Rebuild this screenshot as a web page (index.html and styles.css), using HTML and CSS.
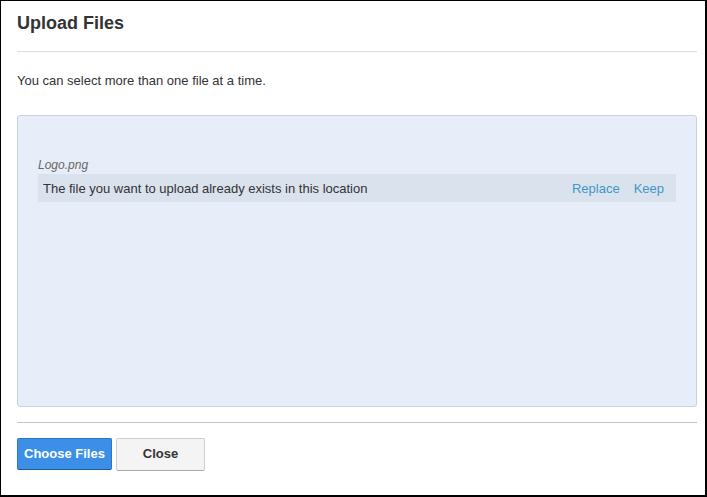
FILE: index.html
```html
<!DOCTYPE html>
<html lang="en">
<head>
<meta charset="utf-8">
<title>Upload Files</title>
<link rel="stylesheet" href="styles.css">
</head>
<body>
<div class="dialog">
  <h1 class="title">Upload Files</h1>
  <hr class="rule rule-top">
  <p class="hint">You can select more than one file at a time.</p>
  <div class="dropzone">
    <div class="file-name">Logo.png</div>
    <div class="conflict">
      <span class="conflict-msg">The file you want to upload already exists in this location</span>
      <span class="actions">
        <a class="action" href="#">Replace</a>
        <a class="action" href="#">Keep</a>
      </span>
    </div>
  </div>
  <hr class="rule rule-bottom">
  <div class="buttons">
    <button class="btn btn-primary">Choose Files</button>
    <button class="btn btn-default">Close</button>
  </div>
</div>
</body>
</html>
```
FILE: styles.css
```css
html, body {
  margin: 0;
  padding: 0;
  background: #fff;
}
body {
  font-family: "Liberation Sans", Arial, sans-serif;
  font-size: 13px;
  color: #333;
}
.dialog {
  box-sizing: border-box;
  width: 707px;
  height: 497px;
  border: 1px solid #000;
  border-right-width: 2px;
  border-bottom-width: 2px;
  padding: 12px 8px 0 16px;
}
.title {
  margin: 0;
  font-size: 18px;
  line-height: 20px;
  font-weight: bold;
  color: #333;
}
.rule {
  border: 0;
  height: 1px;
  margin: 0;
}
.rule-top {
  background: #dcdcdc;
  margin-top: 18px;
}
.hint {
  margin: 20px 0 0;
  line-height: 18px;
}
.dropzone {
  box-sizing: border-box;
  margin-top: 25px;
  height: 292px;
  background: #e8eef9;
  border: 1px solid #c8d3e2;
  border-radius: 3px;
  padding: 41px 20px 0;
}
.file-name {
  font-size: 12px;
  line-height: 16px;
  font-style: italic;
  color: #666;
}
.conflict {
  margin-top: 1px;
  height: 28px;
  display: flex;
  align-items: center;
  justify-content: space-between;
  background: #dae2ee;
  padding: 1px 12px 0 5px;
  box-sizing: border-box;
}
.actions {
  display: flex;
  gap: 14px;
}
.action {
  color: #3d98c7;
  text-decoration: none;
}
.rule-bottom {
  background: #c4c4c4;
  margin-top: 15px;
}
.buttons {
  display: flex;
  gap: 4px;
  margin-top: 15px;
}
.btn {
  font-family: "Liberation Sans", Arial, sans-serif;
  font-size: 13px;
  font-weight: bold;
  height: 32px;
  border-radius: 2px;
  padding: 0 0 1px;
  cursor: pointer;
}
.btn-primary {
  width: 95px;
  background: #3b8fe6;
  color: #fff;
  border: 1px solid #2d76c4;
  border-bottom-color: #1f5c9e;
}
.btn-default {
  width: 89px;
  height: 33px;
  padding-bottom: 2px;
  background: #f4f4f4;
  color: #333;
  border: 1px solid #cfcfcf;
  border-bottom-color: #a9a9a9;
}
```
